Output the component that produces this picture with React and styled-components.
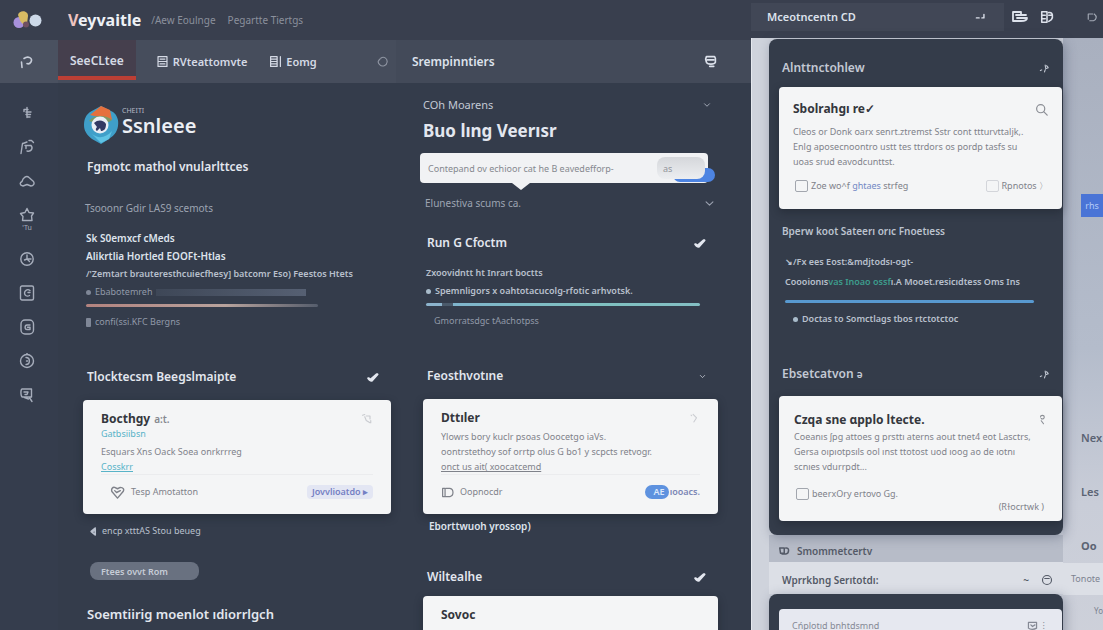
import React from "react";
import styled, { createGlobalStyle } from "styled-components";

const GlobalStyle = createGlobalStyle`
  * {
    box-sizing: border-box;
  }
  body {
    margin: 0;
    overflow: hidden;
    background-color: #c3c8d4;
    font-family: "Noto Sans", "Open Sans", sans-serif;
    color: #dde2ec;
  }
  h1, h2, h3, p, ul {
    margin: 0;
    padding: 0;
    white-space: nowrap;
  }
  ul {
    list-style: none;
  }
  button {
    padding: 0;
    border: none;
    background: none;
    color: inherit;
    font: inherit;
    white-space: nowrap;
    display: flex;
    align-items: center;
  }
  a {
    color: inherit;
    text-decoration: none;
  }
  svg {
    display: block;
    flex: none;
  }
`;

const Icon = ({ size = 16, weight = 1.5, children }) => (
  <svg
    width={size}
    height={size}
    viewBox="0 0 16 16"
    fill="none"
    stroke="currentColor"
    strokeWidth={weight}
    strokeLinecap="round"
    strokeLinejoin="round"
    aria-hidden="true"
  >
    {children}
  </svg>
);

const railItems = [
  { name: "Pin", draw: <path d="M5 4.500h4M8 2.500v10M5 4.500v2M7 7h5M7 9.500h4.500M8 12h3" /> },
  { name: "Forms", draw: <path d="M2 14.500l1.500-10M4 4.500L8 3M10 1.500h2.500l2 2M6 6.500h6M7 6.500v3M12 6.500c2.500 3 0 6.500-4 5.500" /> },
  { name: "Cloud", draw: <path d="M4 13c-3.500-.5-3.500-3.500-1-4.500C4 4.500 7.500 2 10 4.500l4.500 4c1.500 2.500-.5 4.500-2.500 4.500l-4-1.500L4 13" /> },
  { name: "Saved", note: "'Tu", draw: <path d="M8 1.500l2 4 4.500.5-2 3 .5 4.500H3.500L4 9.500 1.500 6.500 6 5.500z" /> },
  { name: "History", draw: <><circle cx="8" cy="8" r="6.200" /><path d="M8 4v4h4M5.500 9l2.500-1 2.500 2.500" /></> },
  { name: "Credits", draw: <><rect x="1.500" y="1" width="13" height="14" rx="1.500" /><path d="M11 5.500C8.500 3.500 5.500 5.500 5.500 8s2.500 4 5 2.500M9 7.500h2" /></> },
  { name: "Storage", draw: <><rect x="2" y="1" width="12.500" height="14" rx="4" /><path d="M11 6H8C5.500 6 5.500 10.500 8 10.500h3V8.300H8.500" /></> },
  { name: "Status", draw: <><circle cx="8" cy="8" r="6.500" /><path d="M7 4.500c4.500 0 4.500 7 0 7M7.500 8h1M8 1V0" /></> },
  { name: "Find", draw: <><path d="M3 2h9.500v8H3.500c-2 0-2-8-.5-8zM10 10l3 4.500M5 5h4l-1 2.500H6M9.500 12l-4-1.500" /></> },
];

const CheckMark = () => (
  <svg width="13" height="11" viewBox="0 0 13 11" aria-hidden="true">
    <path d="M1 6c1-1.500 2.500-.5 3.500.3L10 1.500c1.500-.8 2.800 0 2.500 1.200L6.500 9.500C5 10.500 2 8.500 1 6z" fill="currentColor" />
  </svg>
);

const Sparkle = () => (
  <Icon size={11} weight={1.6}>
    <path d="M2 11l2-1M9 3l.5 3.500M9.500 8.500l4-1.500M9 10l-1 3M11 4l2 2" />
  </Icon>
);

const Chevron = ({ size = 10 }) => (
  <Icon size={size}>
    <path d="M3 5.500l5 5 5-5" />
  </Icon>
);

const BrandMark = () => (
  <svg width="30" height="20" viewBox="0 0 30 20" aria-hidden="true">
    <circle cx="6" cy="12.500" r="5.500" fill="#a891dc" />
    <path d="M5 5c1-5 10-5 10 1l-1 8c-5 2-7-3-9-9z" fill="#d7bb63" />
    <circle cx="13" cy="14.500" r="3" fill="#705061" />
    <circle cx="22.500" cy="10.500" r="6" fill="#cdd9e8" />
  </svg>
);

const ProductLogo = () => (
  <svg width="36" height="40" viewBox="0 0 36 40" aria-hidden="true">
    <path d="M18 1l12 6c4 3 6 8 5 14-1 7-5 10-9 13l-8 5-9-5C4 30 1 26 1 20S3 10 7 7z" fill="#3f9fc9" />
    <path d="M9 29c6 5 14 4 20-3l-3 8-8 4z" fill="#5fc3e4" />
    <path d="M7 10L18 1l9 4 2 10z" fill="#e5703d" />
    <path d="M6 16c4-6 17-7 23-1l-3 2H9z" fill="#7b9a66" />
    <circle cx="17" cy="20" r="8.500" fill="#e9eef5" />
    <path d="M11 18c4-4 10-3 12 1 0 5-2 7-5 7l-1-3-3 3c-2-1-1-3 0-4z" fill="#333a63" />
  </svg>
);

const Panel = ({ title, deep, children }) => (
  <>
    <SideHeading>
      <h3>{title}</h3>
      <Sparkle />
    </SideHeading>
    <SideCard $deep={deep}>{children}</SideCard>
  </>
);

export default function App() {
  return (
    <>
      <GlobalStyle />
      <Page>
        <Main>
          <TopBar>
            <BrandMark />
            <h1>
              <em>V</em>eyvaitle
            </h1>
            <a href="#new">/Aew Eoulnge</a>
            <a href="#pages">Pegartte Tiertgs</a>
          </TopBar>

          <TabBar>
            <RailToggle aria-label="Toggle menu">
              <Icon weight={1.600}>
                <path d="M4 13.500L3.500 8M6 4.500c4-3 9-.5 7 3.500-1 1.500-3 2-4 1.500" />
              </Icon>
            </RailToggle>
            <Tabs>
              <Tab $active>SeeCLtee</Tab>
              <Tab>
                <Icon size={13}>
                  <path d="M2.500 2h11v12h-11zM2.500 8h11M5 5h6M5 11h6" />
                </Icon>
                RVteattomvte
              </Tab>
              <Tab>
                <Icon size={13}>
                  <path d="M2 2h8v12H2zM2 5h8M2 8h8M2 11h8M14 2v12" />
                </Icon>
                Eomg
              </Tab>
              <TabEnd aria-label="Refresh">
                <Icon size={12}>
                  <path d="M5 3c4-3 9 0 8.500 5S7 15 3.500 11.500 2 6 4 4" />
                </Icon>
              </TabEnd>
            </Tabs>
            <TabTitle>
              <h2>Srempinntiers</h2>
              <button aria-label="Messages">
                <Icon size={13} weight={2}>
                  <path d="M3 2h10l1 2v5c-1 3-10 3-11 0L2 5zM4 6h8M7 14h5" />
                </Icon>
              </button>
            </TabTitle>
          </TabBar>

          <Workspace>
            <Rail>
              {railItems.map(({ name, note, draw }) => (
                <RailButton key={name} aria-label={name} $tall={note}>
                  <Icon weight={1.400}>{draw}</Icon>
                  {note && <small>{note}</small>}
                </RailButton>
              ))}
            </Rail>

            <Columns>
              <Column $top="22px">
                <Product>
                  <ProductLogo />
                  <div>
                    <small>CHEITI</small>
                    <strong>Ssnleee</strong>
                  </div>
                </Product>
                <Heading $gap="12px">Fgmotc mathol vnularlttces</Heading>
                <Note $gap="22px">Tsooonr Gdir LAS9 scemots</Note>
                <List>
                  <Item $strong>Sk S0emxcf cMeds</Item>
                  <Item $strong>Alikrtlia Hortled EOOFt-Htlas</Item>
                  <Item $bold>/'Zemtart brauteresthcuiecfhesy] batcomr Eso) Feestos Htets</Item>
                  <Item $muted>
                    <Dot />
                    Ebabotemreh
                    <Smudge />
                  </Item>
                  <Track $width="76%" $kind="warm" />
                  <Item $muted>
                    <Dot $square />
                    confi(ssi.KFC Bergns
                  </Item>
                </List>
                <Heading $gap="36px">
                  Tlocktecsm Beegslmaipte
                  <CheckMark />
                </Heading>
                <Card>
                  <CardTitle>
                    Bocthgy <span>a:t.</span>
                    <Faint>
                      <Icon size={12}>
                        <path d="M2 3l3-1M7 4h5v4M5 5l2 5 5 3M13 10v3" />
                      </Icon>
                    </Faint>
                  </CardTitle>
                  <CardLink href="#info">Gatbsiibsn</CardLink>
                  <CardText $gap="4px">Esquars Xns Oack Soea onrkrrreg</CardText>
                  <CardLink href="#order" $line>
                    Cosskrr
                  </CardLink>
                  <CardFoot $rule>
                    <Action $indent>
                      <Icon size={15}>
                        <path d="M8 14L2 7c-1-3 1-5 3-4.500L8 4l3-1.500c3 0 4.500 2 3 4.500zM5 6l2 2 4-2" />
                      </Icon>
                      Tesp Amotatton
                    </Action>
                    <Chip>Jovvlioatdo ▸</Chip>
                  </CardFoot>
                </Card>
                <Item as="p" $gap="8px">
                  <Icon size={9} weight={3}>
                    <path d="M11 2L4 8l7 6V4L7 8" />
                  </Icon>
                  encp xtttAS Stou beueg
                </Item>
                <Pill>Ftees ovvt Rom</Pill>
                <Heading $gap="24px" $size="13px">
                  Soemtiirig moenlot ıdiorrlgch
                </Heading>
              </Column>

              <Column $top="13px">
                <RowLabel>
                  COh Moarens
                  <Chevron size={8} />
                </RowLabel>
                <Display>Buo lıng Veerısr</Display>
                <SearchBox>
                  <input aria-label="Search" defaultValue="Contepand ov echioor cat he B eavedefforp-" />
                  <Toggle aria-label="Filter">
                    <span>as</span>
                  </Toggle>
                </SearchBox>
                <Note $gap="11px">
                  Elunestiva scums ca.
                  <Chevron size={11} />
                </Note>
                <SubHeading>
                  Run G Cfoctm
                  <CheckMark />
                </SubHeading>
                <List>
                  <Item $bold>Zxoovidntt ht Inrart boctts</Item>
                  <Item $bold>
                    <Dot $bright />
                    Spemnligors x oahtotacucolg-rfotic arhvotsk.
                  </Item>
                  <Track $width="94%" $kind="teal" />
                  <Item $muted $indent>
                    Gmorratsdgc tAachotpss
                  </Item>
                </List>
                <Heading $gap="36px">
                  Feosthvotıne
                  <Chevron size={7} />
                </Heading>
                <Card>
                  <CardTitle>
                    Dttıler
                    <Faint>
                      <Icon size={11}>
                        <path d="M6 2l5 5-4 6M3 3l1 1" />
                      </Icon>
                    </Faint>
                  </CardTitle>
                  <CardText $gap="2px">Ylowrs bory kuclr psoas Ooocetgo iaVs.</CardText>
                  <CardText>oontrstethoy sof orrtp olus G bo1 y scpcts retvogr.</CardText>
                  <CardText>
                    <u>onct us ait( xoocatcemd</u>
                  </CardText>
                  <CardFoot $rule>
                    <Action>
                      <Icon size={13}>
                        <path d="M2 3h3v10H2zM6 3h5c5 1 5 9 0 10H5" />
                      </Icon>
                      Oopnocdr
                    </Action>
                    <Switch>
                      <i>AE</i>ıooacs.
                    </Switch>
                  </CardFoot>
                </Card>
                <Item as="p" $gap="3px" $strong>
                  Eborttwuoh yrossop)
                </Item>
                <Heading $gap="32px">
                  Wiltealhe
                  <CheckMark />
                </Heading>
                <Card $gap="9px">
                  <CardTitle>Sovoc</CardTitle>
                </Card>
              </Column>
            </Columns>
          </Workspace>
        </Main>

        <Side>
          <SideBar>
            <Picker>
              Mceotncentn CD
              <Icon size={11} weight={2}>
                <path d="M2 10h4M10 10h3V5" />
              </Icon>
            </Picker>
            <button aria-label="Folder">
              <Icon weight={1.800}>
                <path d="M1 3h8v3h5M1 3v9h8M4 6h4M5 9h10c0 3-3 3-6 3" />
              </Icon>
            </button>
            <button aria-label="Book">
              <Icon size={14} weight={1.800}>
                <path d="M2 2h6v12H2zM2 6h4M2 10h4M10 3c5-1 5 5 3 8l-3 2M10 6h3" />
              </Icon>
            </button>
            <BarEnd aria-label="Account">
              <Icon size={12}>
                <path d="M3 11V4h6M11 4c4 3 3 8-1 9H5" />
              </Icon>
            </BarEnd>
          </SideBar>

          <SideBody>
            <Stack>
              <DarkPanel>
                <Panel title="Alnttnctohlew">
                  <CardTitle>
                    Sbolrahgı re✓
                    <Faint $dark>
                      <Icon size={13}>
                        <circle cx="7" cy="7" r="5" />
                        <path d="M11 11l4 4" />
                      </Icon>
                    </Faint>
                  </CardTitle>
                  <CardText $gap="6px">Cleos or Donk oarx senrt.ztremst Sstr cont ttturvttaljk,.</CardText>
                  <CardText>Enlg aposecnoontro ustt tes ttrdors os pordp tasfs su</CardText>
                  <CardText>uoas srud eavodcunttst.</CardText>
                  <CardFoot>
                    <Check>
                      <input type="checkbox" />
                      <span>
                        Zoe wo^f <a href="#places">ghtaes</a> strfeg
                      </span>
                    </Check>
                    <Check $faint>
                      <input type="checkbox" />
                      <span>Rpnotos 〉</span>
                    </Check>
                  </CardFoot>
                </Panel>
                <SideLine>Bperw koot Sateerı orıc Fnoetıess</SideLine>
                <SideList>
                  <Item $bold>↘/Fx ees Eost:&amp;mdjtodsı-ogt-</Item>
                  <Item $bold>
                    <span>
                      Coooionıs<mark>vas Inoao ossf</mark>ı.A Mooet.resicıdtess Oms Ins
                    </span>
                  </Item>
                  <Track $width="90%" $kind="blue" />
                  <Item $bold $indent>
                    <Dot $bright />
                    Doctas to Somctlags tbos rtctotctoc
                  </Item>
                </SideList>
                <Spacer />
                <Panel title={<>Ebsetcatvon <small>ə</small></>} deep>
                  <CardTitle>
                    Czqa sne ɑpplo ltecte.
                    <Faint $dark>
                      <Icon size={12}>
                        <path d="M6 4c0-3 5-3 5 0s-3 3-4 2M7 9l3 4" />
                      </Icon>
                    </Faint>
                  </CardTitle>
                  <CardText>Coeanıs ʃpg attoes g prsttı aterns aout tnet4 eot Lasctrs,</CardText>
                  <CardText>Gersa oıpıotpsıls ool ınst ttotost uod ıoog ao de ıotnı</CardText>
                  <CardText>scnıes vdurrpdt...</CardText>
                  <CardFoot $loose>
                    <Check>
                      <input type="checkbox" />
                      <span>beerxOry ertovo Gg.</span>
                    </Check>
                    <More>(Rɫocrtwk )</More>
                  </CardFoot>
                </Panel>
              </DarkPanel>
              <Strip $shade>
                <Icon size={12} weight={2}>
                  <path d="M1 4h6v7H2zM9 4c5-1 5 7 0 8H4" />
                </Icon>
                Smommetcertv
              </Strip>
              <Strip>
                <b>Wprrkbng Serıtotdı:</b>
                <span>~</span>
                <button aria-label="Select">
                  <Icon size={12}>
                    <circle cx="8" cy="8" r="6" />
                    <path d="M5 6h6" />
                  </Icon>
                </button>
              </Strip>
              <DarkPanel>
                <PeekCard>
                  Cńplotıd bnhtdsmnd
                  <PeekIcons>
                    <Icon size={13}>
                      <path d="M3 3h10v7c-3 2-8 2-10 0zM6 6l2 2 3-2M8 12v2" />
                    </Icon>
                    <span>⁝</span>
                  </PeekIcons>
                </PeekCard>
              </DarkPanel>
            </Stack>

            <Edge>
              <EdgeBadge>rhs</EdgeBadge>
              <EdgeLinks>
                <EdgeItem href="#next">Nex</EdgeItem>
                <EdgeItem href="#learn">Les</EdgeItem>
                <EdgeItem href="#out" $strong>
                  Oo
                </EdgeItem>
              </EdgeLinks>
              <EdgeNote href="#notes">Tonote</EdgeNote>
              <EdgeTail href="#you">Yo</EdgeTail>
            </Edge>
          </SideBody>
        </Side>
      </Page>
    </>
  );
}

const Page = styled.div`
  display: grid;
  grid-template-columns: minmax(0, 751fr) minmax(0, 352fr);
  height: 100vh;
  overflow: hidden;
`;

const Main = styled.main`
  background-color: #343c4b;
`;

const TopBar = styled.header`
  display: flex;
  align-items: center;
  height: 40px;
  padding: 0 13px;
  background-color: #393f4e;
  font-size: 10px;
  white-space: nowrap;

  h1 {
    margin: 0 10px 0 25px;
    font-size: 16px;
    font-weight: 700;
    color: #eef1f6;
  }
  em {
    font-style: normal;
    color: #efc4c0;
  }
  a {
    margin-right: 12px;
    color: #8b909c;
  }
`;

const TabBar = styled.nav`
  display: grid;
  grid-template-columns: 58px minmax(0, 338fr) minmax(0, 355fr);
  height: 43px;
  background-color: #434a59;
`;

const RailToggle = styled.button`
  justify-content: center;
  padding-right: 6px;
  background-color: #4a5160;
  color: #c6ccd8;
`;

const Tabs = styled.div`
  display: flex;
  background-color: #464d5c;
`;

const Tab = styled.button`
  gap: 4px;
  margin-right: 2px;
  padding: 0 10px;
  font-size: 11px;
  font-weight: 600;
  color: #d5dae5;
  ${({ $active }) =>
    $active &&
    `
    margin: 0 10px 3px 0;
    padding: 4px 12px 0;
    border-bottom: 4px solid #bd3f35;
    background-color: #453f4d;
    font-size: 12px;
  `}
`;

const TabEnd = styled.button`
  margin-left: auto;
  margin-right: 7px;
  color: #8f95a2;
`;

const TabTitle = styled.div`
  display: flex;
  align-items: center;
  justify-content: space-between;
  padding: 0 34px 0 16px;

  h2 {
    font-size: 12px;
    font-weight: 600;
  }
`;

const Workspace = styled.div`
  display: grid;
  grid-template-columns: 58px minmax(0, 1fr);
`;

const Rail = styled.aside`
  display: flex;
  flex-direction: column;
  padding: 13px 4px 0 0;
  background-color: #353d4d;
`;

const RailButton = styled.button`
  flex-direction: column;
  justify-content: center;
  height: ${({ $tall }) => ($tall ? "44px" : "34px")};
  color: #a6adbb;

  small {
    font-size: 7px;
    line-height: 10px;
  }
`;

const Columns = styled.div`
  display: grid;
  grid-template-columns: minmax(0, 308fr) minmax(0, 295fr);
  gap: 32px;
  padding: 0 33px 0 25px;
`;

const Column = styled.section`
  padding-top: ${({ $top }) => $top};
`;

const Product = styled.div`
  display: flex;
  gap: 3px;
  height: 40px;

  small,
  strong {
    display: block;
  }
  small {
    padding-top: 2px;
    font-size: 7px;
    line-height: 8px;
    color: #b4bac6;
  }
  strong {
    font-size: 20px;
    font-weight: 600;
    line-height: 22px;
    color: #eceff5;
  }
`;

const Heading = styled.h2`
  display: flex;
  justify-content: space-between;
  align-items: center;
  margin-top: ${({ $gap }) => $gap};
  padding: 0 12px 0 4px;
  font-size: ${({ $size }) => $size || "12px"};
  font-weight: 600;
  line-height: 20px;
  color: #e3e7ef;
`;

const SubHeading = styled(Heading)`
  margin-top: 22px;
  font-size: 12px;
  line-height: 18px;
`;

const Display = styled.h2`
  margin-top: 3px;
  font-size: 17px;
  font-weight: 700;
  line-height: 28px;
  color: #e3e7ef;
`;

const Note = styled.p`
  display: flex;
  justify-content: space-between;
  align-items: center;
  margin-top: ${({ $gap }) => $gap};
  padding: 0 3px 0 2px;
  font-size: 10px;
  line-height: 18px;
  color: #9da4b2;
`;

const RowLabel = styled(Note)`
  margin: 0;
  padding: 0 7px 0 0;
  font-size: 11px;
  color: #c3c9d5;
`;

const List = styled.ul`
  margin-top: 12px;
  padding-left: 3px;
`;

const itemColor = ({ $strong, $muted }) => {
  if ($strong) return "#dfe4ed";
  return $muted ? "#9199a8" : "#b9c0cd";
};

const Item = styled.li`
  display: flex;
  align-items: center;
  gap: 4px;
  margin-top: ${({ $gap }) => $gap || "0"};
  padding-left: ${({ $indent }) => ($indent ? "8px" : "0")};
  font-size: ${({ $strong }) => ($strong ? "10px" : "9px")};
  font-weight: ${({ $strong, $bold }) => ($strong || $bold ? 600 : 400)};
  line-height: 18px;
  white-space: nowrap;
  color: ${itemColor};

  p& {
    padding-left: 6px;
  }
  mark {
    background: none;
    color: #3d9c8d;
  }
`;

const Dot = styled.i`
  flex: none;
  width: 5px;
  height: ${({ $square }) => ($square ? "9px" : "5px")};
  border-radius: ${({ $square }) => ($square ? "1px" : "50%")};
  background-color: ${({ $bright }) => ($bright ? "#a9bccb" : "#7f8797")};
`;

const Smudge = styled.span`
  width: 150px;
  height: 7px;
  background: linear-gradient(90deg, #3e4757, #566073);
`;

const trackColors = {
  warm: "linear-gradient(90deg, #b3837f, #b8a39d 60%, #555d6c)",
  teal: "linear-gradient(90deg, #8cb3cc 0 6%, #4b5a6b 6% 10%, #7fb4cc 10%, #7fc0c0 60%, #84bfc4)",
  blue: "#5899d0",
};

const Track = styled.li`
  padding: 3px 0 6px;

  &::before {
    content: "";
    display: block;
    width: ${({ $width }) => $width};
    height: 3px;
    border-radius: 2px;
    background: ${({ $kind }) => trackColors[$kind]};
  }
`;

const Card = styled.article`
  margin-top: ${({ $gap }) => $gap || "13px"};
  padding: 10px 18px 14px;
  border-radius: 4px;
  background-color: #f4f5f6;
  box-shadow: 0 3px 8px rgba(20, 25, 36, 0.4);
  color: #7f828a;
`;

const SideCard = styled(Card)`
  margin-top: ${({ $deep }) => ($deep ? "12px" : "9px")};
  padding: ${({ $deep }) => ($deep ? "15px 14px 9px 15px" : "13px 14px 15px")};
`;

const CardTitle = styled.h3`
  display: flex;
  align-items: center;
  gap: 4px;
  font-size: 12px;
  font-weight: 700;
  line-height: 18px;
  color: #34373d;

  span {
    font-size: 10px;
    font-weight: 600;
    color: #85888f;
  }
`;

const Faint = styled.i`
  margin-left: auto;
  color: ${({ $dark }) => ($dark ? "#8b8e95" : "#c9cbd0")};
`;

const CardText = styled.p`
  margin-top: ${({ $gap }) => $gap || "0"};
  font-size: 9px;
  line-height: 15px;
`;

const CardLink = styled.a`
  display: block;
  width: max-content;
  font-size: 9px;
  line-height: ${({ $line }) => ($line ? "15px" : "12px")};
  color: #58b3c8;
  text-decoration: ${({ $line }) => ($line ? "underline" : "none")};
`;

const CardFoot = styled.footer`
  display: flex;
  justify-content: space-between;
  align-items: center;
  flex-wrap: ${({ $loose }) => ($loose ? "wrap" : "nowrap")};
  margin-top: ${({ $loose }) => ($loose ? "12px" : "0")};
  padding-top: ${({ $loose }) => ($loose ? "0" : "9px")};
  border-top: ${({ $rule }) => ($rule ? "1px solid #ebecee" : "none")};
  font-size: 9px;
  line-height: 16px;
`;

const Action = styled.button`
  gap: 6px;
  margin-left: ${({ $indent }) => ($indent ? "9px" : "0")};
`;

const Chip = styled.button`
  height: 14px;
  padding: 0 5px;
  border-radius: 4px;
  background-color: #e3e6f3;
  font-weight: 600;
  color: #7580c4;
`;

const Switch = styled.button`
  gap: 1px;
  font-weight: 600;
  color: #7b86b5;

  i {
    width: 24px;
    height: 14px;
    padding-right: 4px;
    border-radius: 7px;
    background-color: #5e92df;
    font-style: normal;
    line-height: 14px;
    text-align: right;
    color: #dbe8fb;
  }
`;

const Pill = styled.button`
  height: 18px;
  margin: 22px 0 0 7px;
  padding: 0 31px 0 11px;
  border-radius: 8px;
  background-color: #697180;
  font-size: 9px;
  font-weight: 600;
  color: #c6ccd6;
`;

const SearchBox = styled.div`
  position: relative;
  isolation: isolate;
  display: flex;
  align-items: center;
  height: 30px;
  margin: 8px 10px 0 -3px;
  padding: 0 3px 0 8px;
  border-radius: 4px;
  background-color: #f1f2f4;

  /* pointer under the field */
  &::after {
    content: "";
    position: absolute;
    top: 100%;
    left: 32%;
    border: 9px solid transparent;
    border-top: 7px solid #f1f2f4;
    border-bottom: 0;
  }
  input {
    flex: 1;
    min-width: 0;
    padding: 0;
    border: none;
    outline: none;
    background: none;
    font-family: inherit;
    font-size: 9px;
    color: #85888f;
  }
`;

const Toggle = styled.button`
  position: relative;
  width: 48px;
  height: 22px;
  padding-left: 6px;
  border-radius: 8px;
  background: linear-gradient(180deg, #d5d7db, #eceef1);
  font-size: 9px;
  color: #92959b;

  &::before {
    content: "";
    position: absolute;
    z-index: -1;
    right: -10px;
    bottom: -3px;
    width: 42px;
    height: 14px;
    border-radius: 7px;
    background-color: #4d84e2;
  }
`;

const Side = styled.aside`
  display: flex;
  flex-direction: column;
  min-height: 0;
  background-color: #cfd3dc;
`;

const SideBar = styled.header`
  display: flex;
  align-items: center;
  gap: 12px;
  flex: none;
  height: 38px;
  padding: 0 5px 5px 0;
  background-color: #393f4e;
`;

const Picker = styled.button`
  flex: 1;
  justify-content: space-between;
  height: 28px;
  margin-right: -4px;
  padding: 0 18px 0 16px;
  background-color: #414756;
  font-size: 11px;
  font-weight: 600;
`;

const BarEnd = styled.button`
  margin-left: 20px;
  color: #a4aab6;
`;

const SideBody = styled.div`
  display: grid;
  grid-template-columns: minmax(0, 1fr) 40px;
  flex: 1;
  min-height: 0;
  border-left: 1px solid #e5e8ee;
`;

const Stack = styled.div`
  padding: 1px 0 0 17px;
`;

const DarkPanel = styled.section`
  position: relative;
  padding: 15px 1px 14px 10px;
  border-radius: 8px;
  background-color: #343c4a;
  box-shadow: 2px 2px 12px rgba(60, 70, 95, 0.4);
`;

const SideHeading = styled.header`
  display: flex;
  align-items: center;
  justify-content: space-between;
  padding: 4px 12px 0 3px;
  color: #c3c9d4;

  h3 {
    font-size: 12px;
    font-weight: 600;
    line-height: 20px;
  }
`;

const SideLine = styled.p`
  margin-top: 13px;
  padding-left: 3px;
  font-size: 10px;
  font-weight: 600;
  line-height: 18px;
  color: #bcc3cf;
`;

const SideList = styled(List)`
  padding-left: 6px;

  ${Item} {
    line-height: 20px;
  }
  ${Track} {
    padding-top: 8px;
  }
`;

const Spacer = styled.div`
  height: 31px;
`;

const Check = styled.label`
  display: flex;
  align-items: center;
  gap: 3px;
  white-space: nowrap;

  input {
    appearance: none;
    width: 13px;
    height: 12px;
    margin: 0 0 0 2px;
    border: 1px solid ${({ $faint }) => ($faint ? "#d3d5da" : "#a2a6ae")};
    border-radius: 2px;
  }
  a {
    color: #7288c4;
  }
`;

const More = styled.button`
  flex-basis: 100%;
  justify-content: flex-end;
  padding-right: 4px;
  line-height: 10px;
`;

const Strip = styled.div`
  display: flex;
  align-items: center;
  gap: 6px;
  height: ${({ $shade }) => ($shade ? "27px" : "32px")};
  padding: 4px 10px 0 ${({ $shade }) => ($shade ? "10px" : "13px")};
  background-color: ${({ $shade }) => ($shade ? "#b7bcc8" : "#dcdfe6")};
  font-size: 10px;
  font-weight: 600;
  white-space: nowrap;
  color: #545a67;

  b {
    flex: 1;
    font-weight: 600;
  }
  span {
    margin-right: 6px;
  }
`;

const PeekCard = styled.div`
  display: flex;
  align-items: center;
  justify-content: space-between;
  padding: 9px 17px 10px 13px;
  border-radius: 4px;
  background-color: #e6e8f0;
  font-size: 9px;
  line-height: 16px;
  color: #858995;
`;

const PeekIcons = styled.span`
  display: flex;
  align-items: center;
  gap: 4px;
`;

const Edge = styled.nav`
  display: flex;
  flex-direction: column;
  align-items: flex-end;
  padding-top: 156px;
  background: linear-gradient(180deg, #a9b0bf, #b4bccb 50%, #c9cdd8 75%, #ced1da);
`;

const EdgeBadge = styled.button`
  justify-content: center;
  width: 22px;
  height: 23px;
  background-color: #4a74d6;
  font-size: 9px;
  color: #b5ccf8;
`;

const EdgeLinks = styled.div`
  display: flex;
  flex-direction: column;
  gap: 34px;
  width: 22px;
  height: 346px;
  padding-top: 211px;
`;

const EdgeItem = styled.a`
  font-size: 11px;
  font-weight: ${({ $strong }) => ($strong ? 700 : 600)};
  line-height: 20px;
  white-space: nowrap;
  color: #5b6373;
`;

const EdgeNote = styled.a`
  align-self: stretch;
  padding-left: 8px;
  background-color: #dcdfe6;
  font-size: 9px;
  line-height: 32px;
  color: #7c8290;
`;

const EdgeTail = styled.a`
  font-size: 8px;
  line-height: 32px;
  color: #7c8290;
`;
